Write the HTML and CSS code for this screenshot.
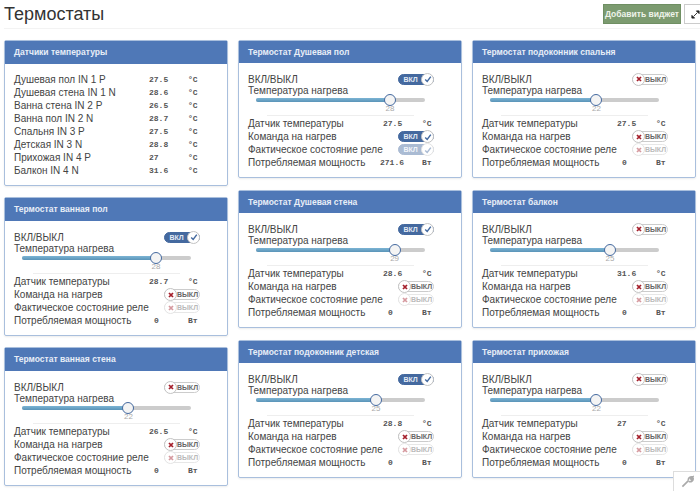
FILE: index.html
```html
<!DOCTYPE html>
<html lang="ru">
  <head>
    <meta charset="UTF-8" />
    <title>Термостаты</title>
    <link rel="stylesheet" href="styles.css">
  </head>
  <body>
    <svg class="defs" width="0" height="0">
      <symbol id="i-check" viewBox="0 0 10 10">
        <path d="M1.5 5.5 L4 8 L8.5 2" fill="none" stroke="#44699f" stroke-width="1.8" />
      </symbol>
      <symbol id="i-cross" viewBox="0 0 10 10">
        <path d="M2.5 2.5 L7.5 7.5 M7.5 2.5 L2.5 7.5" fill="none" stroke="#a5202c" stroke-width="2.2" />
      </symbol>
    </svg>

    <div class="page-head">
      <h1>Термостаты</h1>
      <button class="btn-add">Добавить виджет</button>
      <button class="btn-full">
        <svg width="9" height="9" viewBox="0 0 10 10">
          <path d="M6 1 H9 V4 Z M1 6 V9 H4 Z M3 7 L7 3" fill="#222" stroke="#222" stroke-width="1" />
        </svg>
      </button>
    </div>

    <div class="columns">
      <div class="col col-first">
        <div class="panel">
          <div class="panel-head">Датчики температуры</div>
          <div class="panel-body sensors">
            <div class="row"><span class="label">Душевая пол IN 1 P</span><span class="val">27.5</span><span class="unit">°C</span></div>
            <div class="row"><span class="label">Душевая стена IN 1 N</span><span class="val">28.6</span><span class="unit">°C</span></div>
            <div class="row"><span class="label">Ванна стена IN 2 P</span><span class="val">26.5</span><span class="unit">°C</span></div>
            <div class="row"><span class="label">Ванна пол IN 2 N</span><span class="val">28.7</span><span class="unit">°C</span></div>
            <div class="row"><span class="label">Спальня IN 3 P</span><span class="val">27.5</span><span class="unit">°C</span></div>
            <div class="row"><span class="label">Детская IN 3 N</span><span class="val">28.8</span><span class="unit">°C</span></div>
            <div class="row"><span class="label">Прихожая IN 4 P</span><span class="val">27</span><span class="unit">°C</span></div>
            <div class="row"><span class="label">Балкон IN 4 N</span><span class="val">31.6</span><span class="unit">°C</span></div>
          </div>
        </div>

        <div class="panel">
          <div class="panel-head">Термостат ванная пол</div>
          <div class="panel-body">
            <div class="row row-switch"><span class="label">ВКЛ/ВЫКЛ</span><span class="toggle on"><b>ВКЛ</b><i><svg><use href="#i-check" /></svg></i></span></div>
            <div class="row-title">Температура нагрева</div>
            <div class="slider"><div class="fill" style="width: 79.3%"></div><div class="thumb" style="left: 79.3%"></div></div>
            <div class="slider-val"><span style="left: 79.3%">28</span></div>
            <hr />
            <div class="row"><span class="label">Датчик температуры</span><span class="val">28.7</span><span class="unit">°C</span></div>
            <div class="row row-switch"><span class="label">Команда на нагрев</span><span class="toggle"><i><svg><use href="#i-cross" /></svg></i><b>ВЫКЛ</b></span></div>
            <div class="row row-switch"><span class="label">Фактическое состояние реле</span><span class="toggle dim"><i><svg><use href="#i-cross" /></svg></i><b>ВЫКЛ</b></span></div>
            <div class="row"><span class="label">Потребляемая мощность</span><span class="val power">0</span><span class="unit">Вт</span></div>
          </div>
        </div>

        <div class="panel">
          <div class="panel-head">Термостат ванная стена</div>
          <div class="panel-body">
            <div class="row row-switch"><span class="label">ВКЛ/ВЫКЛ</span><span class="toggle"><i><svg><use href="#i-cross" /></svg></i><b>ВЫКЛ</b></span></div>
            <div class="row-title">Температура нагрева</div>
            <div class="slider"><div class="fill" style="width: 63%"></div><div class="thumb" style="left: 63%"></div></div>
            <div class="slider-val"><span style="left: 63%">22</span></div>
            <hr />
            <div class="row"><span class="label">Датчик температуры</span><span class="val">26.5</span><span class="unit">°C</span></div>
            <div class="row row-switch"><span class="label">Команда на нагрев</span><span class="toggle"><i><svg><use href="#i-cross" /></svg></i><b>ВЫКЛ</b></span></div>
            <div class="row row-switch"><span class="label">Фактическое состояние реле</span><span class="toggle dim"><i><svg><use href="#i-cross" /></svg></i><b>ВЫКЛ</b></span></div>
            <div class="row"><span class="label">Потребляемая мощность</span><span class="val power">0</span><span class="unit">Вт</span></div>
          </div>
        </div>
      </div>

      <div class="col">
        <div class="panel">
          <div class="panel-head">Термостат Душевая пол</div>
          <div class="panel-body">
            <div class="row row-switch"><span class="label">ВКЛ/ВЫКЛ</span><span class="toggle on"><b>ВКЛ</b><i><svg><use href="#i-check" /></svg></i></span></div>
            <div class="row-title">Температура нагрева</div>
            <div class="slider"><div class="fill" style="width: 79.3%"></div><div class="thumb" style="left: 79.3%"></div></div>
            <div class="slider-val"><span style="left: 79.3%">28</span></div>
            <hr />
            <div class="row"><span class="label">Датчик температуры</span><span class="val">27.5</span><span class="unit">°C</span></div>
            <div class="row row-switch"><span class="label">Команда на нагрев</span><span class="toggle on"><b>ВКЛ</b><i><svg><use href="#i-check" /></svg></i></span></div>
            <div class="row row-switch"><span class="label">Фактическое состояние реле</span><span class="toggle on dim"><b>ВКЛ</b><i><svg><use href="#i-check" /></svg></i></span></div>
            <div class="row"><span class="label">Потребляемая мощность</span><span class="val power">271.6</span><span class="unit">Вт</span></div>
          </div>
        </div>

        <div class="panel">
          <div class="panel-head">Термостат Душевая стена</div>
          <div class="panel-body">
            <div class="row row-switch"><span class="label">ВКЛ/ВЫКЛ</span><span class="toggle on"><b>ВКЛ</b><i><svg><use href="#i-check" /></svg></i></span></div>
            <div class="row-title">Температура нагрева</div>
            <div class="slider"><div class="fill" style="width: 82%"></div><div class="thumb" style="left: 82%"></div></div>
            <div class="slider-val"><span style="left: 82%">29</span></div>
            <hr />
            <div class="row"><span class="label">Датчик температуры</span><span class="val">28.6</span><span class="unit">°C</span></div>
            <div class="row row-switch"><span class="label">Команда на нагрев</span><span class="toggle"><i><svg><use href="#i-cross" /></svg></i><b>ВЫКЛ</b></span></div>
            <div class="row row-switch"><span class="label">Фактическое состояние реле</span><span class="toggle dim"><i><svg><use href="#i-cross" /></svg></i><b>ВЫКЛ</b></span></div>
            <div class="row"><span class="label">Потребляемая мощность</span><span class="val power">0</span><span class="unit">Вт</span></div>
          </div>
        </div>

        <div class="panel">
          <div class="panel-head">Термостат подоконник детская</div>
          <div class="panel-body">
            <div class="row row-switch"><span class="label">ВКЛ/ВЫКЛ</span><span class="toggle on"><b>ВКЛ</b><i><svg><use href="#i-check" /></svg></i></span></div>
            <div class="row-title">Температура нагрева</div>
            <div class="slider"><div class="fill" style="width: 71%"></div><div class="thumb" style="left: 71%"></div></div>
            <div class="slider-val"><span style="left: 71%">25</span></div>
            <hr />
            <div class="row"><span class="label">Датчик температуры</span><span class="val">28.8</span><span class="unit">°C</span></div>
            <div class="row row-switch"><span class="label">Команда на нагрев</span><span class="toggle"><i><svg><use href="#i-cross" /></svg></i><b>ВЫКЛ</b></span></div>
            <div class="row row-switch"><span class="label">Фактическое состояние реле</span><span class="toggle dim"><i><svg><use href="#i-cross" /></svg></i><b>ВЫКЛ</b></span></div>
            <div class="row"><span class="label">Потребляемая мощность</span><span class="val power">0</span><span class="unit">Вт</span></div>
          </div>
        </div>
      </div>

      <div class="col">
        <div class="panel">
          <div class="panel-head">Термостат подоконник спальня</div>
          <div class="panel-body">
            <div class="row row-switch"><span class="label">ВКЛ/ВЫКЛ</span><span class="toggle"><i><svg><use href="#i-cross" /></svg></i><b>ВЫКЛ</b></span></div>
            <div class="row-title">Температура нагрева</div>
            <div class="slider"><div class="fill" style="width: 63%"></div><div class="thumb" style="left: 63%"></div></div>
            <div class="slider-val"><span style="left: 63%">22</span></div>
            <hr />
            <div class="row"><span class="label">Датчик температуры</span><span class="val">27.5</span><span class="unit">°C</span></div>
            <div class="row row-switch"><span class="label">Команда на нагрев</span><span class="toggle"><i><svg><use href="#i-cross" /></svg></i><b>ВЫКЛ</b></span></div>
            <div class="row row-switch"><span class="label">Фактическое состояние реле</span><span class="toggle dim"><i><svg><use href="#i-cross" /></svg></i><b>ВЫКЛ</b></span></div>
            <div class="row"><span class="label">Потребляемая мощность</span><span class="val power">0</span><span class="unit">Вт</span></div>
          </div>
        </div>

        <div class="panel">
          <div class="panel-head">Термостат балкон</div>
          <div class="panel-body">
            <div class="row row-switch"><span class="label">ВКЛ/ВЫКЛ</span><span class="toggle"><i><svg><use href="#i-cross" /></svg></i><b>ВЫКЛ</b></span></div>
            <div class="row-title">Температура нагрева</div>
            <div class="slider"><div class="fill" style="width: 71%"></div><div class="thumb" style="left: 71%"></div></div>
            <div class="slider-val"><span style="left: 71%">25</span></div>
            <hr />
            <div class="row"><span class="label">Датчик температуры</span><span class="val">31.6</span><span class="unit">°C</span></div>
            <div class="row row-switch"><span class="label">Команда на нагрев</span><span class="toggle"><i><svg><use href="#i-cross" /></svg></i><b>ВЫКЛ</b></span></div>
            <div class="row row-switch"><span class="label">Фактическое состояние реле</span><span class="toggle dim"><i><svg><use href="#i-cross" /></svg></i><b>ВЫКЛ</b></span></div>
            <div class="row"><span class="label">Потребляемая мощность</span><span class="val power">0</span><span class="unit">Вт</span></div>
          </div>
        </div>

        <div class="panel">
          <div class="panel-head">Термостат прихожая</div>
          <div class="panel-body">
            <div class="row row-switch"><span class="label">ВКЛ/ВЫКЛ</span><span class="toggle"><i><svg><use href="#i-cross" /></svg></i><b>ВЫКЛ</b></span></div>
            <div class="row-title">Температура нагрева</div>
            <div class="slider"><div class="fill" style="width: 63%"></div><div class="thumb" style="left: 63%"></div></div>
            <div class="slider-val"><span style="left: 63%">22</span></div>
            <hr />
            <div class="row"><span class="label">Датчик температуры</span><span class="val">27</span><span class="unit">°C</span></div>
            <div class="row row-switch"><span class="label">Команда на нагрев</span><span class="toggle"><i><svg><use href="#i-cross" /></svg></i><b>ВЫКЛ</b></span></div>
            <div class="row row-switch"><span class="label">Фактическое состояние реле</span><span class="toggle dim"><i><svg><use href="#i-cross" /></svg></i><b>ВЫКЛ</b></span></div>
            <div class="row"><span class="label">Потребляемая мощность</span><span class="val power">0</span><span class="unit">Вт</span></div>
          </div>
        </div>
      </div>
    </div>

    <div class="wrench">
      <svg width="13" height="13" viewBox="0 0 14 14">
        <path d="M1.5 12.5 L8 6 M8 6 C7.5 3.5 9.5 1.5 12.5 2 L10.5 4 L11 5 L12.5 5 L13 3.5 C13.5 6 11 8 8.5 7" fill="none" stroke="#aaa" stroke-width="1.8" />
      </svg>
    </div>
  </body>
</html>
```

FILE: styles.css
```css
html,
body {
  height: 100%;
  overflow: hidden;
}
body {
  margin: 0;
  background: white;
  color: #444;
  font-family: "Liberation Sans", Arial, sans-serif;
  font-size: 10px;
}
.defs {
  position: absolute;
}
.page-head {
  display: flex;
  align-items: flex-start;
  height: 29px;
  margin-left: 4px;
  padding-top: 4px;
  box-sizing: border-box;
  border-bottom: 1px solid #f3f3f3;
}
h1 {
  flex: 1;
  margin: 0;
  color: #333;
  font-size: 18px;
  font-weight: normal;
  line-height: 20px;
}
.btn-add {
  width: 78px;
  height: 20px;
  margin-right: 3px;
  padding: 0;
  border: 1px solid #6f8f63;
  background: #7c9b70;
  color: #eef3ea;
  font-family: inherit;
  font-size: 8.5px;
  font-weight: bold;
}
.btn-full {
  display: flex;
  align-items: center;
  justify-content: flex-end;
  width: 16px;
  height: 20px;
  padding: 0;
  border: 1px solid #ccc;
  border-right: 0;
  background: white;
}
.columns {
  display: grid;
  grid-template-columns: repeat(3, 224px);
  column-gap: 10px;
  padding: 11px 0 0 4px;
}
.col {
  display: flex;
  flex-direction: column;
  gap: 12px;
}
.col-first {
  gap: 11px;
}
.panel {
  border: 1px solid #a9bfdd;
  border-radius: 2px;
  box-shadow: 0 1px 2px rgba(0, 0, 0, 0.08);
}
.panel-head {
  height: 22px;
  padding-left: 9px;
  background: #4f78b7;
  color: #e8eef7;
  font-size: 8.5px;
  font-weight: bold;
  line-height: 22px;
}
.col-first .panel-head {
  height: 23px;
  line-height: 23px;
}
.panel-body {
  padding: 10px 0 8px 9px;
}
.sensors {
  padding-top: 9px;
  padding-bottom: 8px;
}
.row {
  display: flex;
  align-items: center;
  height: 13px;
  line-height: 13px;
  white-space: nowrap;
}
.label {
  width: 132px;
}
.val {
  width: 21px;
  padding-left: 3px;
  box-sizing: border-box;
  font-family: "Liberation Mono", monospace;
  font-size: 8px;
  font-weight: bold;
  color: #555;
}
.val.power {
  padding-left: 0;
  text-align: center;
}
.unit {
  margin-left: 21px;
  font-family: "Liberation Mono", monospace;
  font-size: 8px;
  font-weight: bold;
  color: #555;
}
.row-switch .label {
  width: 150px;
}
.panel-body > .row-switch:first-child {
  height: 12px;
}
.row-title {
  height: 11px;
  line-height: 11px;
}
.toggle {
  display: flex;
  align-items: center;
  justify-content: space-between;
  box-sizing: border-box;
  width: 36px;
  height: 11px;
  border: 1px solid #ccc;
  border-radius: 6px;
  background: white;
  color: #666;
  font-size: 7px;
}
.toggle b {
  flex: 1;
  font-weight: bold;
  text-align: center;
}
.toggle i {
  display: flex;
  align-items: center;
  justify-content: center;
  flex: none;
  box-sizing: border-box;
  width: 13px;
  height: 13px;
  margin: 0 -1px;
  border: 1px solid #c4c4c4;
  border-radius: 50%;
  background: white;
}
.toggle svg {
  width: 8px;
  height: 8px;
}
.toggle.on {
  border-color: #44699f;
  background: #44699f;
  color: #e4ebf5;
}
.toggle.dim {
  opacity: 0.45;
}
.slider {
  position: relative;
  width: 169px;
  height: 4px;
  margin: 2px 0 2px 8px;
  border-radius: 2px;
  background: #ccc;
}
.fill {
  height: 100%;
  border-radius: 2px;
  background: linear-gradient(#7cb4d4, #5a94b8);
}
.thumb {
  position: absolute;
  top: -4px;
  width: 12px;
  height: 12px;
  margin-left: -6px;
  box-sizing: border-box;
  border: 1px solid #44699f;
  border-radius: 50%;
  background: #f4f4f4;
}
.slider-val {
  position: relative;
  width: 169px;
  height: 10px;
  margin-left: 8px;
  color: #aaa;
  font-size: 8px;
  line-height: 10px;
}
.slider-val span {
  position: absolute;
  transform: translateX(-50%);
}
hr {
  width: 147px;
  height: 1px;
  margin: 1px 0 1px 19px;
  border: 0;
  background: #eee;
}
.wrench {
  position: absolute;
  right: 0;
  bottom: 0;
  display: flex;
  align-items: center;
  justify-content: center;
  width: 26px;
  height: 19px;
  border-top: 1px solid #ddd;
  border-left: 1px solid #ddd;
  background: white;
}
```
